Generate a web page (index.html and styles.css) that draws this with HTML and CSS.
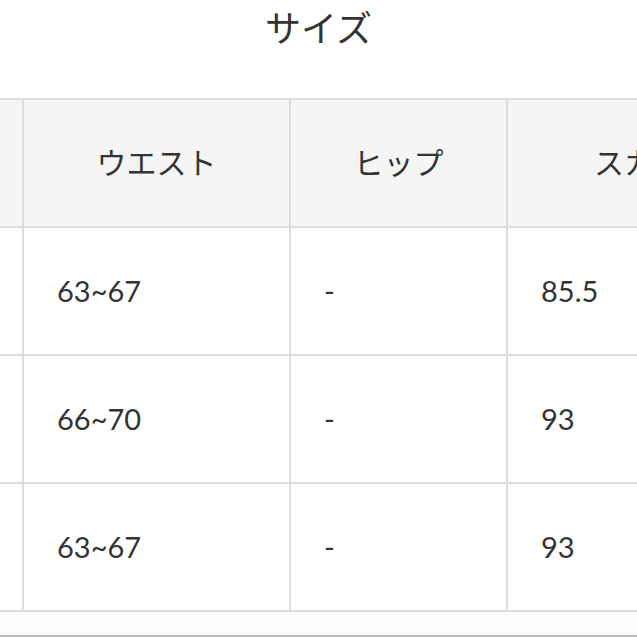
FILE: index.html
```html
<!DOCTYPE html>
<html lang="ja">
<head>
<meta charset="utf-8">
<link rel="stylesheet" href="styles.css">
</head>
<body>
<div class="page">
  <h1 class="title">サイズ</h1>
  <div class="table-wrap">
    <div class="grid">
      <div class="cell head first"></div>
      <div class="cell head">ウエスト</div>
      <div class="cell head">ヒップ</div>
      <div class="cell head">スカート丈</div>

      <div class="cell first"></div>
      <div class="cell num">63~67</div>
      <div class="cell num">-</div>
      <div class="cell num">85.5</div>

      <div class="cell first"></div>
      <div class="cell num">66~70</div>
      <div class="cell num">-</div>
      <div class="cell num">93</div>

      <div class="cell first"></div>
      <div class="cell num">63~67</div>
      <div class="cell num">-</div>
      <div class="cell num">93</div>
    </div>
    <div class="tail"></div>
  </div>
</div>
</body>
</html>
```
FILE: styles.css
```css
* { box-sizing: border-box; }
html, body { margin: 0; padding: 0; background: #ffffff; }
body {
  width: 637px;
  height: 637px;
  overflow: hidden;
  font-family: "Lato", "Noto Sans CJK JP", sans-serif;
  color: #333333;
}
.page { width: 637px; }
.title {
  margin: 0;
  height: 98px;
  padding-top: 5px;
  text-align: center;
  font-family: "Noto Sans CJK JP", sans-serif;
  font-weight: 400;
  font-size: 36px;
  line-height: 42px;
  color: #333333;
}
.table-wrap {
  width: 637px;
  overflow: hidden;
}
.grid {
  display: grid;
  width: 830px;
  grid-template-columns: 22px 267px 217px 324px;
  grid-auto-rows: 128px;
  border-bottom: 2px solid #dcdcdc;
}
.cell {
  border-top: 2px solid #dcdcdc;
  border-left: 2px solid #dcdcdc;
  display: flex;
  align-items: center;
  padding-left: 33px;
  font-size: 29px;
  background: #ffffff;
  white-space: nowrap;
  overflow: hidden;
}
.cell.first { border-left: none; padding: 0; }
.cell.head {
  background: #f5f5f5;
  justify-content: center;
  padding-left: 0;
  padding-bottom: 5px;
  font-family: "Noto Sans CJK JP", sans-serif;
  font-size: 30px;
}
.num { padding-bottom: 2px; }
.tail {
  height: 25px;
  background: #fbfbfb;
  border-bottom: 2px solid #b8b8b8;
}
```
